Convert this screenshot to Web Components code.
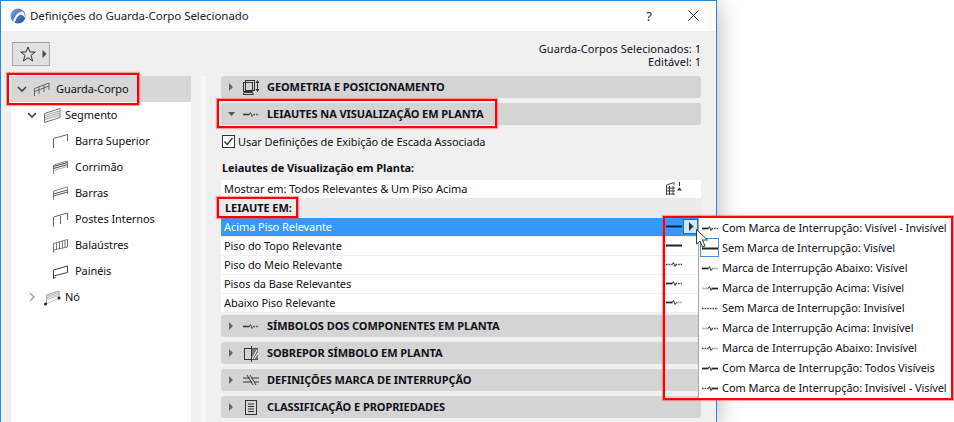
<!DOCTYPE html>
<html lang="pt"><head><meta charset="utf-8"><title>Definições do Guarda-Corpo Selecionado</title>
<style>
html,body{margin:0;background:#fff;overflow:hidden;width:954px;height:422px}
body{font:11px "Noto Sans","Liberation Sans",sans-serif;letter-spacing:-.07px;color:#101018;white-space:nowrap}
</style></head><body>
<x-window>
  <x-titlebar slot="title">Definições do Guarda-Corpo Selecionado</x-titlebar>
  <x-toolbar slot="toolbar"></x-toolbar>
  <x-tree slot="tree">
    <x-tree-item level="0" chevron="down" icon="rail" selected>Guarda-Corpo<x-mark slot="over" style="left:-4px;top:-3px;width:132px;height:32px"></x-mark></x-tree-item>
    <x-tree-item level="1" chevron="down" icon="segment">Segmento</x-tree-item>
    <x-tree-item level="2" icon="top">Barra Superior</x-tree-item>
    <x-tree-item level="2" icon="hand">Corrimão</x-tree-item>
    <x-tree-item level="2" icon="bars">Barras</x-tree-item>
    <x-tree-item level="2" icon="posts">Postes Internos</x-tree-item>
    <x-tree-item level="2" icon="balu">Balaústres</x-tree-item>
    <x-tree-item level="2" icon="panel">Painéis</x-tree-item>
    <x-tree-item level="1" chevron="right" icon="node">Nó</x-tree-item>
  </x-tree>
  <x-panels slot="panels">
    <x-panel-header icon="geo">GEOMETRIA E POSICIONAMENTO</x-panel-header>
    <x-panel-header icon="line" open>LEIAUTES NA VISUALIZAÇÃO EM PLANTA<x-mark slot="over" style="left:-4px;top:-4px;width:280px;height:29px"></x-mark></x-panel-header>
    <x-plan-section>
      <x-check slot="check">Usar Definições de Exibição de Escada Associada</x-check>
      <span slot="title">Leiautes de Visualização em Planta:</span>
      <x-list-row slot="show" kind="stair" plain>Mostrar em: Todos Relevantes &amp; Um Piso Acima</x-list-row>
      <x-head slot="head">LEIAUTE EM:<x-mark slot="over" style="left:-4px;top:-1px;width:81px;height:21px"></x-mark></x-head>
      <x-list-row kind="solid" selected>Acima Piso Relevante
        <x-popup slot="over">
          <x-popup-item l="solid" r="dot">Com Marca de Interrupção: Visível - Invisível</x-popup-item>
          <x-popup-item l="none" r="none" focus>Sem Marca de Interrupção: Visível</x-popup-item>
          <x-popup-item l="solid" r="light">Marca de Interrupção Abaixo: Visível</x-popup-item>
          <x-popup-item l="light" r="solid">Marca de Interrupção Acima: Visível</x-popup-item>
          <x-popup-item l="dotall" r="dotall">Sem Marca de Interrupção: Invisível</x-popup-item>
          <x-popup-item l="light" r="dot">Marca de Interrupção Acima: Invisível</x-popup-item>
          <x-popup-item l="dot" r="light">Marca de Interrupção Abaixo: Invisível</x-popup-item>
          <x-popup-item l="solid" r="solid">Com Marca de Interrupção: Todos Visíveis</x-popup-item>
          <x-popup-item l="dot" r="solid">Com Marca de Interrupção: Invisível - Visível</x-popup-item>
        </x-popup>
        <x-mark slot="over" style="left:442px;top:-2px;width:290px;height:184px"></x-mark>
      </x-list-row>
      <x-list-row kind="solid">Piso do Topo Relevante</x-list-row>
      <x-list-row kind="dotdot">Piso do Meio Relevante</x-list-row>
      <x-list-row kind="soliddot">Pisos da Base Relevantes</x-list-row>
      <x-list-row kind="solidlight">Abaixo Piso Relevante</x-list-row>
    </x-plan-section>
    <x-panel-header icon="line">SÍMBOLOS DOS COMPONENTES EM PLANTA</x-panel-header>
    <x-panel-header icon="overlay">SOBREPOR SÍMBOLO EM PLANTA</x-panel-header>
    <x-panel-header icon="cut">DEFINIÇÕES MARCA DE INTERRUPÇÃO</x-panel-header>
    <x-panel-header icon="doc">CLASSIFICAÇÃO E PROPRIEDADES</x-panel-header>
  </x-panels>
</x-window>
<script>
function el(name, css, html){
  customElements.define(name, class extends HTMLElement{
    connectedCallback(){
      if(this.shadowRoot) return;
      const r=this.attachShadow({mode:'open'});
      r.innerHTML='<style>'+css+'</style>'+(typeof html==='function'?html(this):html);
    }
  });
}
function lineSeg(kind,x1,x2){
  const y=4.5;
  if(kind==='none') return '';
  if(kind==='solid') return `<path d="M${x1} ${y}H${x2}" stroke="#222" stroke-width="1.7"/>`;
  if(kind==='light') return `<path d="M${x1} ${y}H${x2}" stroke="#bdbdbd" stroke-width="1.7"/>`;
  return `<path d="M${x1} ${y}H${x2}" stroke="#444" stroke-width="1.5" stroke-dasharray="1.6 1"/>`;
}
function lineIcon(l,r){
  let s='<svg width="16" height="9" viewBox="0 0 16 9" fill="none" style="display:block">';
  if(l==='none') s+='<path d="M0 4.5H16" stroke="#222" stroke-width="2"/>';
  else if(l==='dotall') s+='<path d="M0 4.5H16" stroke="#444" stroke-width="1.5" stroke-dasharray="1.6 1"/>';
  else{
    s+=lineSeg(l,0,6.5)+lineSeg(r,9.5,16);
    s+='<path d="M6 4.5L7.5 2.5L9 6.5L10.5 4.5" stroke="#333" stroke-width="1"/>';
  }
  return s+'</svg>';
}
const T={
 rail:'<path d="M1.5 15V7.5L16 2M1.5 10.5L16 5M6 5.8V13M11 4V11M16 2V9" fill="none" stroke="#666"/>',
 segment:'<path d="M1.5 15.5V6.5L17 1.5V10.5Z" fill="#f4f4f4" stroke="#777"/><path d="M2 8.5L16.5 4M2 10.5L16.5 6M2 12.5L16.5 8" stroke="#aaa"/>',
 top:'<path d="M1.5 15V5.5L15.5 1.5V8" fill="none" stroke="#666"/>',
 hand:'<path d="M1.5 15V6L15.5 2V9" fill="none" stroke="#888"/><path d="M1.5 7.5L15.5 3.5M1.5 9.5L15.5 5.5" stroke="#444"/><path d="M2 11.5L15 7.5" stroke="#aaa"/>',
 bars:'<path d="M1.5 15V6L15.5 2V9" fill="none" stroke="#888"/><path d="M1.5 9L15.5 5M1.5 11L15.5 7" stroke="#555"/>',
 posts:'<path d="M1.5 15.5V6L15.5 2V9M8.5 5V13" fill="none" stroke="#666"/>',
 balu:'<path d="M1.5 15.5V6.5L15.5 2.5V10L1.5 13M4.5 6V12.5M7.5 5V12M10.5 4.2V11.2M13 3.4V10.5" fill="none" stroke="#777"/>',
 panel:'<path d="M1.5 15.5V7L15.5 3V9.5L1.5 13" fill="none" stroke="#444"/><path d="M1.5 15.5L4 14" stroke="#444"/>',
 node:'<path d="M3.5 15V6L16 2V9" fill="none" stroke="#999"/><path d="M3.5 7.5L16 3.5M3.5 9L16 5M3.5 10.5L16 6.5M3.5 15L16 9" stroke="#bbb" fill="none"/><circle cx="2.5" cy="15" r="1.5" fill="#222"/><circle cx="16" cy="9" r="1.5" fill="#222"/>',
};
el('x-mark',`:host{position:absolute;display:block;box-sizing:border-box;border:2px solid #f00;box-shadow:0 0 1px 1px rgba(255,60,60,.45);pointer-events:none;z-index:20}`,'');
el('x-window',`
 :host{display:flex;flex-direction:column;box-sizing:border-box;width:717px;height:422px;border:1px solid #2b88d8;border-bottom:0;background:#f0f0f0;box-shadow:0 4px 22px rgba(0,0,0,.32)}
 .top{height:45px}
 .main{display:flex;flex:1;min-height:0;padding-left:10px}
 .tree{width:180px;flex:none}
 .gap{width:10px;flex:none}
 .split{width:5px;flex:none;background:#f8f8f8}
 .panels{width:480px;flex:none;margin-left:15px}
`,`<slot name="title"></slot><div class="top"><slot name="toolbar"></slot></div>
 <div class="main"><div class="tree"><slot name="tree"></slot></div><div class="gap"></div><div class="split"></div><div class="panels"><slot name="panels"></slot></div></div>`);
el('x-titlebar',`
 :host{display:flex;align-items:center;height:30px;box-sizing:border-box;padding-bottom:1px;background:#fff;font-size:11.5px;color:#222;flex:none}
 svg.l{margin-left:9px;margin-right:4px;display:block}
 .t{flex:1}
 .q{width:14px;text-align:center;font-size:13px;margin-right:32px}
 svg.x{margin-right:17px}
`,`<svg class="l" width="16" height="16" viewBox="0 0 16 16"><defs><linearGradient id="g" x1="0" y1="0" x2="1" y2="1"><stop offset="0" stop-color="#7ea7dd"/><stop offset="1" stop-color="#1c4a99"/></linearGradient></defs><circle cx="8" cy="8" r="7.5" fill="url(#g)"/><path d="M3 13.5C5 7 9 3 12.5 3.5C14.5 5 15 8 15 10C13.5 7.5 12 6.5 10.5 6.8C8 7.5 6 10 4.8 14.5Z" fill="#fff"/></svg><span class="t"><slot></slot></span><span class="q">?</span>
 <svg class="x" width="11" height="11" viewBox="0 0 11 11"><path d="M.5.5L10.5 10.5M10.5.5L.5 10.5" stroke="#222" fill="none"/></svg>`);
el('x-toolbar',`
 :host{display:flex;justify-content:space-between;height:45px;box-sizing:border-box;padding:11px 15px 0 11px}
 .b{display:flex;align-items:center;box-sizing:border-box;width:38px;height:24px;background:#e1e1e1;border:1px solid #a6a6a6;padding-left:7px;gap:6px}
 .i{text-align:right;letter-spacing:.03px}
 .i div{height:13px;line-height:13px}
`,`<div class="b"><svg width="16" height="16" viewBox="0 0 16 16"><path d="M8 1L10 6H15.3L11 9.3L12.6 15L8 11.7L3.4 15L5 9.3L.7 6H6Z" fill="none" stroke="#333"/></svg><svg width="5" height="8" viewBox="0 0 5 8"><path d="M.5 0L4.5 4L.5 8Z" fill="#444"/></svg></div>
 <div class="i"><div>Guarda-Corpos Selecionados: 1</div><div>Editável: 1</div></div>`);
el('x-tree',`:host{display:block;background:#fff;height:100%}`,`<slot></slot>`);
el('x-tree-item',`
 :host{display:flex;position:relative;align-items:center;height:26px;color:#101018}
 :host([selected]){background:#d7d7d7}
 .c{width:10px;height:10px;flex:none;margin-right:6px}
 .ic{flex:none;display:block;width:18px;height:17px;margin-right:4px}
 .tx{padding-bottom:1px}
 :host([level="0"]){padding-left:6px}
 :host([level="1"]){padding-left:16px}
 :host([level="2"]){padding-left:41px}
 :host([level="0"]) .ic{margin-right:5px}
 :host([level="2"]) .ic{width:16px;margin-right:7px}
`,h=>{
 const c=h.getAttribute('chevron');
 const chev=c==='down'?'<svg class="c" viewBox="0 0 10 10"><path d="M1 3L5 7L9 3" fill="none" stroke="#444" stroke-width="1.6"/></svg>':
  c==='right'?'<svg class="c" viewBox="0 0 10 10"><path d="M3 1L7 5L3 9" fill="none" stroke="#aaa" stroke-width="1.6"/></svg>':'';
 const w=h.getAttribute('level')==='2'?16:18;
 return chev+`<svg class="ic" viewBox="0 0 ${w} 17">${T[h.getAttribute('icon')]}</svg><span class="tx"><slot></slot></span><slot name="over"></slot>`;
});
const HI={
 geo:'<g fill="none" stroke="#333"><rect x="2.5" y="1.5" width="9" height="10"/><rect x=".5" y="3.5" width="9" height="9"/><path d="M0 15.5L1 13.5H9.5L10.5 15.5Z"/><path d="M14.5 3V11"/></g><path d="M14.5 1L16.5 4H12.5ZM14.5 13L16.5 10H12.5Z" fill="#333"/>',
 line:'<g transform="translate(0,4)"><path d="M0 4.5H6.5" stroke="#333" stroke-width="1.5"/><path d="M6 4.5L7.5 2.5L9 6.5L10.5 4.5" stroke="#444" fill="none"/><path d="M10.5 4.5H16" stroke="#555" stroke-width="1.4" stroke-dasharray="1.6 1"/></g>',
 overlay:'<rect x="1.5" y="3.5" width="13" height="11" fill="none" stroke="#333"/><path d="M8 3.5H15V14.5H8Z" fill="#777"/><path d="M9 14L14 5M11 14L15 8" stroke="#fff"/><path d="M8.5 1V17" stroke="#333"/>',
 cut:'<path d="M0 6H7M0 10H9M9 6H16M11 10H16" stroke="#333" fill="none"/><path d="M4 3L10 13M7 3L13 13" stroke="#333" fill="none"/>',
 doc:'<rect x="2.5" y="1.5" width="11" height="14" fill="none" stroke="#333"/><path d="M5 5H11M5 7.5H11M5 10H11M5 12.5H11" stroke="#333"/>',
};
el('x-panel-header',`
 :host{display:flex;position:relative;align-items:center;height:22px;background:#d4d4d4;border-radius:3px;margin-bottom:5px;font-weight:700;color:#101018}
 .a{width:7px;margin-left:7px;margin-right:8px;flex:none}
 svg.i{flex:none;margin-right:4px;display:block}
 .tx{padding-bottom:1px}
`,h=>`<svg class="a" width="7" height="8" viewBox="0 0 7 8">${h.hasAttribute('open')?'<path d="M0 2H7L3.5 6Z" fill="#555"/>':'<path d="M1 0L5 4L1 8Z" fill="#666"/>'}</svg><svg class="i" width="20" height="17" viewBox="0 0 20 17">${HI[h.getAttribute('icon')]}</svg><span class="tx"><slot></slot></span><slot name="over"></slot>`);
el('x-panels',`:host{display:block}`,`<slot></slot>`);
el('x-head',`:host{display:flex;position:relative;align-items:center;height:20px;box-sizing:border-box;padding:0 0 1px 4px;background:#ebebeb;font-weight:700}`,`<slot></slot><slot name="over"></slot>`);
el('x-plan-section',`
 :host{display:block;margin-top:-5px;height:190px}
 .c{height:34px;box-sizing:border-box;padding:0 0 1px 1px;display:flex;align-items:center}
 .t{font-weight:700;height:21px;box-sizing:border-box;padding:0 0 5px 1px;display:flex;align-items:center}
`,`<div class="c"><slot name="check"></slot></div><div class="t"><slot name="title"></slot></div><slot name="show"></slot><slot name="head"></slot><slot></slot>`);
el('x-check',`
 :host{display:flex;align-items:center;gap:3px}
 svg{display:block}
`,`<svg width="13" height="13" viewBox="0 0 13 13"><rect x=".5" y=".5" width="12" height="12" fill="#fff" stroke="#333"/><path d="M2.5 6.5L5.2 9.5L10.5 3" fill="none" stroke="#333" stroke-width="1.3"/></svg><span><slot></slot></span>`);
const kinds={solid:['none','none'],dotdot:['dot','dot'],soliddot:['solid','dot'],solidlight:['solid','light']};
el('x-list-row',`
 :host{display:flex;position:relative;align-items:center;height:18px;background:#fff;margin-bottom:1px;padding-left:3px;color:#101018}
 :host([plain]){margin-bottom:0}
 :host([selected]){background:#3399ff;color:#fff}
 .t{flex:1;padding-bottom:1px}
 .i{position:absolute;left:445px;top:4px}
 .s{position:absolute;left:444px;top:1px}
 .btn{position:absolute;left:462px;top:1px;width:15px;height:15px;box-sizing:border-box;background:#cfe5f9;border:1px solid #fff;outline:1px solid #1b6fb8;outline-offset:-1px;display:flex;align-items:center;justify-content:center}
`,h=>{
 const k=h.getAttribute('kind');
 let ic;
 if(k==='stair') ic='<svg class="s" width="18" height="16" viewBox="0 0 18 16"><path d="M1.5 14V4L9 1.5V4M1.5 7H10M1.5 10H10M1.5 13H10M4.5 5V14M8 5V14" fill="none" stroke="#444"/><path d="M12 9.5L14.5 6.5L17 9.5Z" fill="#333"/><path d="M14.5 1V5" stroke="#333"/></svg>';
 else ic=`<span class="i">${lineIcon(...kinds[k])}</span>`;
 const btn=h.hasAttribute('selected')?'<span class="btn"><svg width="6" height="9" viewBox="0 0 6 9"><path d="M1 0L5.5 4.5L1 9Z" fill="#333"/></svg></span>':'';
 return `<span class="t"><slot></slot></span>${ic}${btn}<slot name="over"></slot>`;
});
el('x-popup',`
 :host{position:absolute;left:477px;top:-1px;z-index:10;display:block;width:254px;height:181px;box-sizing:border-box;background:#fff;border-left:1px solid #a8a8a8;color:#101018;padding-top:1px}
 svg.cur{position:absolute;left:-3px;top:12px;z-index:5}
`,`<slot></slot><svg class="cur" width="13" height="19" viewBox="0 0 13 19"><path d="M.5.5V15L4 12L6.5 18L9 17L6.5 11H11.5Z" fill="#fff" stroke="#222" stroke-width=".9"/></svg>`);
el('x-popup-item',`
 :host{display:flex;position:relative;align-items:center;height:20px;padding-left:3px;gap:4px}
 i{display:block;flex:none}
 .tx{padding-bottom:1px}
 .f{position:absolute;left:1px;top:0;width:19px;height:19px;box-sizing:border-box;border:1px solid #4a90d9}
`,h=>`<i>${lineIcon(h.getAttribute('l'),h.getAttribute('r'))}</i><span class="tx"><slot></slot></span>${h.hasAttribute('focus')?'<span class="f"></span>':''}`);
</script>
</body></html>
